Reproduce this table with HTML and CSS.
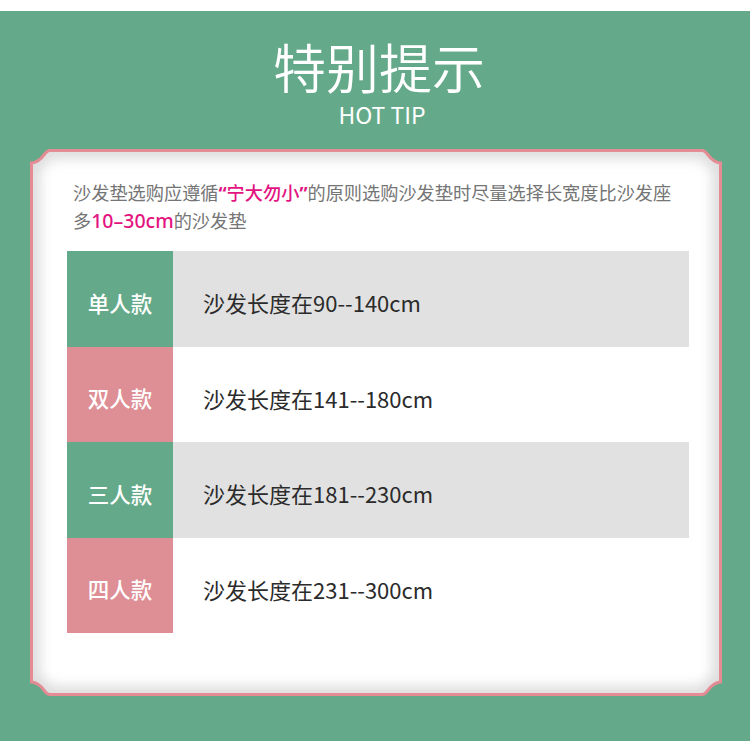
FILE: index.html
```html
<!DOCTYPE html>
<html lang="zh-CN">
<head>
<meta charset="utf-8">
<title>特别提示</title>
<link rel="stylesheet" href="styles.css">
</head>
<body>
<div class="page">
  <section class="panel">
    <header class="head">
      <h1 class="title">特别提示</h1>
      <p class="subtitle">HOT TIP</p>
    </header>
    <div class="card">
      <svg class="frame" viewBox="0 0 692 547" width="692" height="547" aria-hidden="true">
        <defs>
          <clipPath id="cardClip">
            <path id="shape" d="M20,1.5 H672 C677,1.5 678,8 683,11 C686,13 689,14 690.5,14 V533 C689,533 686,534 683,536 C678,539 677,545.5 672,545.5 H20 C15,545.5 14,539 9,536 C6,534 3,533 1.5,533 V14 C3,14 6,13 9,11 C14,8 15,1.5 20,1.5 Z"/>
          </clipPath>
          <filter id="soft" x="-10%" y="-10%" width="120%" height="120%">
            <feGaussianBlur stdDeviation="7"/>
          </filter>
        </defs>
        <use href="#shape" fill="#ffffff"/>
        <g clip-path="url(#cardClip)">
          <use href="#shape" fill="none" stroke="#d6d6d6" stroke-width="14" filter="url(#soft)"/>
        </g>
        <use href="#shape" fill="none" stroke="#e58b93" stroke-width="3"/>
      </svg>
      <p class="intro">沙发垫选购应遵循<span class="hl"><span class="q">“</span>宁大勿小<span class="q">”</span></span>的原则选购沙发垫时尽量选择长宽度比沙发座<br>多<span class="hl num">10–30cm</span>的沙发垫</p>
      <div class="table">
        <div class="row shaded">
          <div class="label green">单人款</div>
          <div class="value">沙发长度在90--140cm</div>
        </div>
        <div class="row">
          <div class="label pink">双人款</div>
          <div class="value">沙发长度在141--180cm</div>
        </div>
        <div class="row shaded">
          <div class="label green">三人款</div>
          <div class="value">沙发长度在181--230cm</div>
        </div>
        <div class="row">
          <div class="label pink">四人款</div>
          <div class="value">沙发长度在231--300cm</div>
        </div>
      </div>
    </div>
  </section>
</div>
</body>
</html>
```

FILE: styles.css
```css
* { box-sizing: border-box; }
html, body { margin: 0; padding: 0; background: #ffffff; }
body { font-family: "Noto Sans CJK SC", "Noto Sans", sans-serif; }
.page { padding-top: 11px; width: 750px; }
.panel {
  background: #64aa8a;
  height: 730px;
  padding-top: 29px;
  display: flex;
  flex-direction: column;
  align-items: flex-start;
}
.head {
  width: 100%;
  padding-left: 8px;
  display: flex;
  flex-direction: column;
  align-items: center;
  color: #ffffff;
}
.title {
  margin: 0 0 6px;
  font-size: 53px;
  line-height: 53px;
  font-weight: 350;
  letter-spacing: 0;
}
.subtitle {
  margin: 0;
  font-size: 23px;
  line-height: 30px;
  font-weight: 400;
  padding-left: 6px;
}
.card {
  position: relative;
  margin: 20px 0 0 30px;
  width: 692px;
  height: 547px;
  padding: 30px 33px 0 37px;
}
.frame {
  position: absolute;
  left: 0;
  top: 0;
  z-index: 0;
}
.intro {
  position: relative;
  margin: 0 0 0 6px;
  width: 630px;
  white-space: nowrap;
  font-size: 18.2px;
  line-height: 27px;
  color: #757575;
  letter-spacing: 0;
}
.hl { color: #e3137f; font-weight: 500; }
.q { font-family: "Noto Sans", sans-serif; font-weight: 700; }
.num { font-family: "Noto Sans", sans-serif; font-weight: 500; font-size: 19.5px; }
.table {
  position: relative;
  margin-top: 17px;
  width: 622px;
  display: flex;
  flex-direction: column;
}
.row {
  height: 95.5px;
  display: grid;
  grid-template-columns: 106px 1fr;
}
.row.shaded { background: #e1e1e1; }
.label {
  display: flex;
  align-items: center;
  justify-content: center;
  color: #ffffff;
  font-size: 21.5px;
  font-weight: 500;
  padding-top: 7px;
}
.label.green { background: #64aa8a; }
.label.pink { background: #de8e95; }
.value {
  display: flex;
  align-items: center;
  padding: 7px 0 0 30px;
  font-size: 22px;
  color: #2b2b2b;
}
```
